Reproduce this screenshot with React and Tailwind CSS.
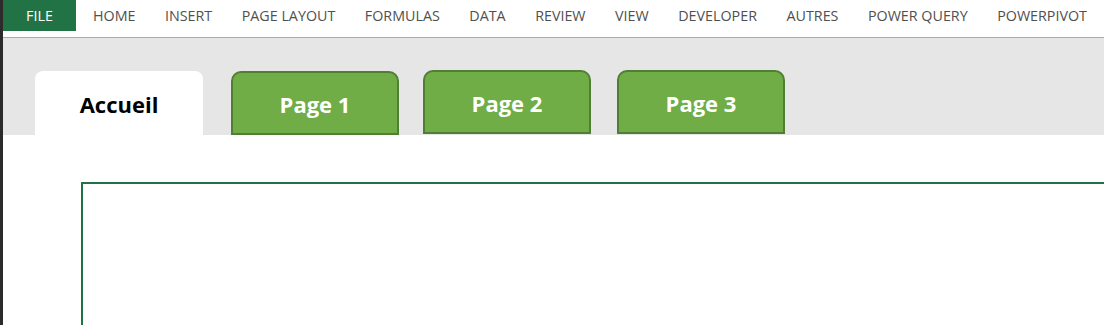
import React from "react";

const menus = ["HOME", "INSERT", "PAGE LAYOUT", "FORMULAS", "DATA", "REVIEW", "VIEW", "DEVELOPER", "AUTRES", "POWER QUERY", "POWERPIVOT"];

const pages = [
  { label: "Page 1", ml: "ml-[28px]", h: "h-[64px]" },
  { label: "Page 2", ml: "ml-[24px]", h: "h-[64px] mb-[1px]" },
  { label: "Page 3", ml: "ml-[26px]", h: "h-[64px] mb-[1px]" },
];

export default function App() {
  return (
    <div className="w-[1104px] h-[325px] flex bg-white overflow-hidden">
      {/* window edge */}
      <div className="w-[3px] h-full bg-[#2b2b2b] shrink-0" />

      <div className="flex-1 flex flex-col min-w-0">
        {/* Ribbon tabs */}
        <div className="h-[38px] flex items-start border-b border-[#ababab] font-['Open_Sans',sans-serif] text-[14.3px]">
          <div className="w-[73px] h-[31px] bg-[#217346] text-white flex items-center justify-center pt-[1px]">FILE</div>
          <div className="flex items-center h-[31px] pt-[1px] gap-[29.5px] ml-[17px] text-[#505050]">
            {menus.map((m) => (
              <span key={m} className="whitespace-nowrap">{m}</span>
            ))}
          </div>
        </div>

        {/* Sheet tabs band */}
        <div className="h-[97px] bg-[#e6e6e6] flex items-end pl-[32px] font-['Open_Sans',sans-serif] font-bold text-[22px]">
          <div className="w-[168px] h-[64px] bg-white rounded-t-[8px] flex items-center justify-center text-black pt-[2px]">
            Accueil
          </div>
          {pages.map((p) => (
            <div
              key={p.label}
              className={`${p.ml} ${p.h} w-[168px] bg-[#70ad47] border-2 border-[#507e32] rounded-t-[10px] flex items-center justify-center text-white pt-[2px]`}
            >
              {p.label}
            </div>
          ))}
        </div>

        {/* Sheet area */}
        <div className="flex-1 pt-[47px] pl-[78px]">
          <div className="h-full border-t-2 border-l-2 border-[#217346]" />
        </div>
      </div>
    </div>
  );
}
